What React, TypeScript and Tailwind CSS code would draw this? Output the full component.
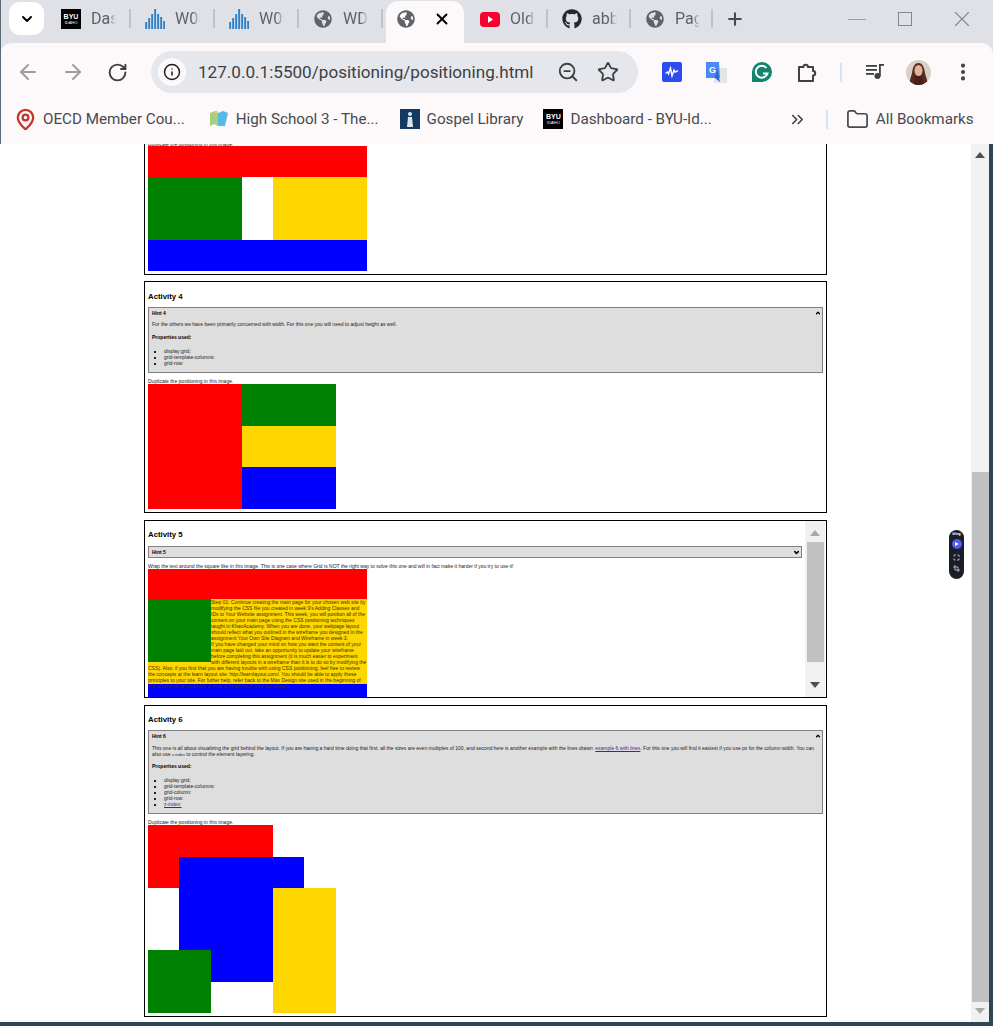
import type { ReactNode } from 'react';
import {
  ArrowLeft,
  ArrowRight,
  ChevronDown,
  ChevronUp,
  ChevronsRight,
  EllipsisVertical,
  Folder,
  Info,
  MapPin,
  Plus,
  RotateCw,
  Star,
  X,
  ZoomOut,
} from 'lucide-react';
import { FaGithub, FaGlobeAmericas } from 'react-icons/fa';

/* favicons */

function ByuLogo() {
  return (
    <div className="flex h-5 w-5 shrink-0 flex-col items-center justify-center bg-black text-white font-['Liberation_Sans',sans-serif] leading-none">
      <span className="text-[7px] font-bold leading-[7px]">BYU</span>
      <span className="text-[4px] leading-[5px]">IDAHO</span>
    </div>
  );
}

function BarsIcon() {
  const bars = [7, 11, 15, 20, 15, 12, 8];
  return (
    <svg width="20" height="20" viewBox="0 0 20 20" className="shrink-0">
      {bars.map((h, i) => (
        <rect key={i} x={i * 3 + 0.2} y={20 - h} width="1.9" height={h} fill="#2f80c8" />
      ))}
    </svg>
  );
}

function Globe({ size = 18 }: { size?: number }) {
  return <FaGlobeAmericas size={size} className="shrink-0 text-[#5f6368]" />;
}

function YoutubeIcon() {
  return (
    <svg width="20" height="15" viewBox="0 0 20 15" className="shrink-0">
      <rect width="20" height="15" rx="4" fill="#f5002f" />
      <path d="M8 4l5 3.5L8 11z" fill="#fff" />
    </svg>
  );
}

function TabLabel({ children }: { children: ReactNode }) {
  return (
    <span className="ml-[10px] w-[25px] overflow-hidden whitespace-nowrap text-[16px] text-[#5f6368] [mask-image:linear-gradient(to_right,black_70%,transparent)]">
      {children}
    </span>
  );
}

function Tab({ icon, label, width = 'w-[84px]' }: { icon: ReactNode; label: string; width?: string }) {
  return (
    <div className={`relative flex h-[34px] shrink-0 items-center pl-[14px] ${width}`}>
      <div className="flex w-5 justify-center">{icon}</div>
      <TabLabel>{label}</TabLabel>
      <div className="absolute right-0 top-[7px] h-[19px] w-[2px] bg-[#bfc2c8]" />
    </div>
  );
}

function TabStrip() {
  return (
    <div className="flex h-[43px] shrink-0 bg-[#dfe1e7] pt-[2px]">
      <div className="ml-[9px] flex h-[33px] w-[35px] items-center justify-center rounded-[11px] bg-white">
        <ChevronDown size={16} strokeWidth={3} className="text-black" />
      </div>
      <div className="ml-[3px] flex">
        <Tab icon={<ByuLogo />} label="Das" />
        <Tab icon={<BarsIcon />} label="W00" />
        <Tab icon={<BarsIcon />} label="W00" />
        <Tab icon={<Globe />} label="WD" />
      </div>
      <div className="-mt-[1px] ml-[3px] flex h-[42px] w-[78px] items-start rounded-t-[12px] bg-[#fdf8fa] pl-[11px] pt-[9px]">
        <Globe />
        <X size={18} strokeWidth={2.5} className="ml-[18px] text-black" />
      </div>
      <div className="flex">
        <div className="relative flex h-[34px] w-[84px] items-center pl-[16px]">
          <YoutubeIcon />
          <TabLabel>Old</TabLabel>
          <div className="absolute right-0 top-[7px] h-[19px] w-[2px] bg-[#bfc2c8]" />
        </div>
        <Tab icon={<FaGithub size={20} className="text-[#24292f]" />} label="abb" width="w-[83px]" />
        <Tab icon={<Globe />} label="Pag" width="w-[82px]" />
      </div>
      <Plus size={20} strokeWidth={2.5} className="ml-[12px] mt-[7px] text-[#45484d]" />
      <div className="ml-auto flex h-[34px] items-center text-[#84878c]">
        <div className="h-px w-[18px] bg-[#9a9da2]" />
        <div className="ml-[32px] h-[14px] w-[14px] border border-[#84878c]" />
        <X size={26} strokeWidth={1} className="ml-[37px] mr-[18px]" />
      </div>
    </div>
  );
}

function PuzzleIcon() {
  return (
    <svg width="21" height="21" viewBox="0 0 21 21" fill="none" stroke="#3c4043" strokeWidth="2" strokeLinejoin="round">
      <path d="M2 5h4.500a2.200 2.200 0 0 1 4.400 0H16v4a2.200 2.200 0 0 1 0 4.400V19H2z" />
    </svg>
  );
}

function Toolbar() {
  return (
    <div className="flex h-[58px] items-center pt-[8px] pb-[8px] text-[#5f6368]">
      <ArrowLeft size={24} strokeWidth={1.9} className="ml-[16px] text-[#9a9da2]" />
      <ArrowRight size={24} strokeWidth={1.9} className="ml-[21px] text-[#9a9da2]" />
      <RotateCw size={21} strokeWidth={2.2} className="ml-[22px] text-[#3c4043]" />
      <div className="ml-[23px] flex h-[42px] w-[487px] items-center rounded-full bg-[#e6e7ec] pl-[7px]">
        <div className="flex h-[28px] w-[28px] items-center justify-center rounded-full bg-[#fdf8fa]">
          <Info size={18} strokeWidth={2} className="text-[#1f1f1f]" />
        </div>
        <span className="ml-[12px] whitespace-nowrap pt-[1px] font-['Roboto',sans-serif] text-[17.100px] text-[#3c4043]">
          127.0.0.1:5500/positioning/positioning.html
        </span>
        <ZoomOut size={22} strokeWidth={2} className="ml-[24px] text-[#3c4043]" />
        <Star size={22} strokeWidth={2} className="ml-[18px] text-[#3c4043]" />
      </div>
      <div className="ml-[24px] flex h-5 w-5 items-center justify-center rounded-[2px] bg-[#2f4cf0]">
        <svg width="14" height="12" viewBox="0 0 14 12" fill="none" stroke="#fff" strokeWidth="1.4" strokeLinecap="round">
          <path d="M1 7l1.500-1 1 2 2-6 1.500 8 2-6 1 2 2.500-1" />
        </svg>
      </div>
      <svg width="21" height="21" viewBox="0 0 21 21" className="ml-[24px]">
        <rect x="8" y="6" width="13" height="15" fill="#e3e4e8" />
        <path d="M0 0h13l1 16H0z" fill="#4a8af4" />
        <path d="M11 6l3 14-5-4z" fill="#3367c9" />
        <text x="3" y="11" fontSize="9" fontWeight="700" fill="#fff" fontFamily="Liberation Sans, sans-serif">
          G
        </text>
      </svg>
      <svg width="20" height="20" viewBox="0 0 20 20" className="ml-[25px]">
        <path d="M10 0a10 10 0 0 1 10 10 10 10 0 0 1-10 10H0V10A10 10 0 0 1 10 0z" fill="#11846b" />
        <path d="M14.500 6a6 6 0 1 0 1 5.500H11" fill="none" stroke="#fff" strokeWidth="2" />
      </svg>
      <div className="ml-[25px] flex">
        <PuzzleIcon />
      </div>
      <div className="ml-[22px] h-[19px] w-[2px] bg-[#d5e2f7]" />
      <svg width="19" height="18" viewBox="0 0 19 18" className="ml-[24px]" fill="#3c4043">
        <rect x="0" y="2" width="11" height="1.800" />
        <rect x="0" y="6" width="11" height="1.800" />
        <rect x="0" y="10" width="8" height="1.800" />
        <rect x="13" y="1" width="1.800" height="12" />
        <rect x="13" y="1" width="5" height="1.800" />
        <circle cx="11.500" cy="13" r="3" />
      </svg>
      <svg width="25" height="25" viewBox="0 0 25 25" className="ml-[21px] rounded-full">
        <rect width="25" height="25" fill="#d8cfc6" />
        <path d="M3 25c1-6 2-8 3-12 1-7 3-10 6.500-10S18 6 19 13c1 4 2 6 3 12z" fill="#5a2a1d" />
        <ellipse cx="12.500" cy="10.500" rx="4" ry="5.500" fill="#e2b39c" />
        <path d="M9 16h7l2 9H7z" fill="#4a1f18" />
      </svg>
      <EllipsisVertical size={22} strokeWidth={2.5} className="ml-[21px] text-[#3c4043]" />
    </div>
  );
}

function Bookmark({ icon, label, className }: { icon: ReactNode; label: string; className: string }) {
  return (
    <div className={`flex items-center ${className}`}>
      {icon}
      <span className="ml-[7px] whitespace-nowrap font-['Roboto',sans-serif] text-[15.200px] text-[#474a4f]">{label}</span>
    </div>
  );
}

function Bookmarks() {
  return (
    <div className="flex h-[36px] items-center">
      <Bookmark
        className="ml-[14px]"
        icon={<MapPin size={23} strokeWidth={2.4} className="-mr-[1px] text-[#c5352d]" />}
        label="OECD Member Cou..."
      />
      <Bookmark
        className="ml-[24px]"
        icon={
          <svg width="20" height="18" viewBox="0 0 20 18">
            <path d="M1 3l5-2 3 2v13l-4-2-4 2z" fill="#a7cf7c" />
            <path d="M9 3l5-2 5 2-3 13H9z" fill="#58b8e6" />
            <circle cx="7" cy="2.500" r="1.800" fill="#e7c35b" />
          </svg>
        }
        label="High School 3 - The..."
      />
      <Bookmark
        className="ml-[21px]"
        icon={
          <div className="flex h-5 w-5 items-center justify-center bg-[#143a5f]">
            <svg width="10" height="16" viewBox="0 0 10 16" fill="#dbe6ef">
              <circle cx="5" cy="3" r="2" />
              <path d="M2 16l1-10h4l1 10z" />
            </svg>
          </div>
        }
        label="Gospel Library"
      />
      <Bookmark className="ml-[20px]" icon={<ByuLogo />} label="Dashboard - BYU-Id..." />
      <ChevronsRight size={19} strokeWidth={2} className="ml-[76px] text-[#3c4043]" />
      <div className="ml-[19px] h-[19px] w-[2px] bg-[#d5e2f7]" />
      <Bookmark
        className="ml-[18px]"
        icon={<Folder size={23} strokeWidth={1.8} className="text-[#45484d]" />}
        label="All Bookmarks"
      />
    </div>
  );
}

/* page content, rendered at browser zoom so everything is tiny */

function ActivityTitle({ children }: { children: ReactNode }) {
  return <h2 className="text-[7.800px] font-bold leading-[10px] text-black">{children}</h2>;
}

function Activity({ className, children }: { className: string; children: ReactNode }) {
  return <section className={`border border-black bg-white px-[3px] ${className}`}>{children}</section>;
}

function ImageLink() {
  return (
    <>
      <span className="text-[#2a2a7a]">this</span> image
    </>
  );
}

function PropertyList({ items }: { items: ReactNode[] }) {
  return (
    <ul className="mt-[8px] list-[square] pl-[12px] leading-[6px]">
      {items.map((item, i) => (
        <li key={i}>{item}</li>
      ))}
    </ul>
  );
}

function HintBox({ title, className, children }: { title: string; className: string; children: ReactNode }) {
  return (
    <div className={`relative border border-[#808080] bg-[#dedede] px-[3px] ${className}`}>
      <div className="pt-[2px] font-bold leading-[6px] text-black">{title}</div>
      <ChevronUp size={6} strokeWidth={5} className="absolute right-[1px] top-[2px] text-black" />
      {children}
    </div>
  );
}

function Activity5Text() {
  return (
    <>
      Step 01: Continue creating the main page for your chosen web site by modifying the CSS file you created in week
      9's Adding Classes and IDs to Your Website assignment. This week, you will position all of the content on your main
      page using the CSS positioning techniques taught in KhanAcademy. When you are done, your webpage layout should
      reflect what you outlined in the wireframe you designed in the assignment Your Own Site Diagram and Wireframe in
      week 3.
      <br />
      If you have changed your mind on how you want the content of your main page laid out, take an opportunity to update
      your wireframe before completing this assignment (it is much easier to experiment with different layouts in a
      wireframe than it is to do so by modifying the CSS). Also, if you find that you are having trouble with using CSS
      positioning, feel free to review the concepts at the learn layout site: http://learnlayout.com/. You should be able
      to apply these principles to your site. For futher help, refer back to the Max Design site used in the beginning of
      the course for an example of how to implement your site design.
    </>
  );
}

function PageContent() {
  return (
    <div className="ml-[144px] flex w-[683px] flex-col font-['Liberation_Sans',Arial,sans-serif] text-[5px] text-[#222]">
      <Activity className="h-[131px] border-t-0">
        <p className="-mt-[3px] h-[5px] leading-[6px]">Duplicate the positioning in this image.</p>
        <div className="grid w-[219px] grid-cols-[94px_31px_94px] grid-rows-[31px_63px_31px]">
          <div className="col-span-3 bg-[#ff0000]" />
          <div className="bg-[#008000]" />
          <div className="bg-white" />
          <div className="bg-[#ffd700]" />
          <div className="col-span-3 bg-[#0000ff]" />
        </div>
      </Activity>

      <Activity className="mt-[6px] h-[232px]">
        <div className="pt-[10px]">
          <ActivityTitle>Activity 4</ActivityTitle>
        </div>
        <HintBox title="Hint 4" className="mt-[5px] h-[66px]">
          <p className="mt-[5px] leading-[6px]">
            For the others we have been primarily concerned with width. For this one you will need to adjust height as
            well.
          </p>
          <p className="mt-[7px] font-bold leading-[6px] text-black">Properties used:</p>
          <PropertyList items={['display:grid;', 'grid-template-columns:', 'grid-row:']} />
        </HintBox>
        <p className="mt-[5px] h-[6px] leading-[6px]">
          Duplicate the positioning in <ImageLink />.
        </p>
        <div className="grid w-[188px] grid-cols-[94px_94px] grid-rows-[42px_41px_42px]">
          <div className="row-span-3 bg-[#ff0000]" />
          <div className="bg-[#008000]" />
          <div className="bg-[#ffd700]" />
          <div className="bg-[#0000ff]" />
        </div>
      </Activity>

      <Activity className="mt-[7px] flex h-[178px] overflow-hidden !pr-[1px]">
        <div className="min-w-0 flex-1 overflow-hidden pr-[3px]">
          <div className="pt-[9px]">
            <ActivityTitle>Activity 5</ActivityTitle>
          </div>
          <div className="relative mt-[6px] h-[12px] border border-[#808080] bg-[#dedede] px-[3px] font-bold leading-[10px] text-black">
            Hint 5
            <ChevronDown size={7} strokeWidth={5} className="absolute right-[1px] top-[2px]" />
          </div>
          <p className="mt-[5px] h-[6px] whitespace-nowrap leading-[6px]">
            Wrap the text around the square like in <ImageLink />. This is one case where Grid is NOT the right way to
            solve this one and will in fact make it harder if you try to use it!
          </p>
          <div className="w-[219px]">
            <div className="h-[30px] bg-[#ff0000]" />
            <div className="h-[85px] bg-[#ffd700] leading-[6px] text-[#3a3000]">
              <div className="float-left h-[63px] w-[63px] bg-[#008000]" />
              <Activity5Text />
            </div>
            <div className="h-[31px] bg-[#0000ff]" />
          </div>
        </div>
        <div className="flex w-[20px] shrink-0 flex-col items-center bg-[#f1f1f1]">
          <svg width="10" height="6" viewBox="0 0 10 6" className="mt-[9px]" fill="#a8a8a8">
            <path d="M5 0l5 6H0z" />
          </svg>
          <div className="mt-[6px] h-[120px] w-[17px] bg-[#c1c1c1]" />
          <svg width="10" height="6" viewBox="0 0 10 6" className="mt-[20px]" fill="#505050">
            <path d="M0 0h10L5 6z" />
          </svg>
        </div>
      </Activity>

      <Activity className="mt-[7px] h-[312px]">
        <div className="pt-[9px]">
          <ActivityTitle>Activity 6</ActivityTitle>
        </div>
        <HintBox title="Hint 6" className="mt-[5px] h-[84px]">
          <p className="mt-[6px] leading-[6px]">
            This one is all about visualizing the grid behind the layout. If you are having a hard time doing that first:
            all the sizes are even multiples of 100, and second here is another example with the lines drawn:{' '}
            <span className="text-[#551a8b] underline">example 6 with lines</span>. For this one you will find it easiest
            if you use px for the column width. You can also use <span className="text-[4px]">z-index</span> to control
            the element layering.
          </p>
          <p className="mb-[1px] mt-[5px] font-bold leading-[6px] text-black">Properties used:</p>
          <PropertyList
            items={[
              'display:grid;',
              'grid-template-columns:',
              'grid-column:',
              'grid-row:',
              <span className="text-[#551a8b] underline">z-index:</span>,
            ]}
          />
        </HintBox>
        <p className="mt-[5px] h-[6px] leading-[6px]">
          Duplicate the positioning in <ImageLink />.
        </p>
        <div className="grid w-[188px] grid-cols-[31px_32px_31px_31px_31px_32px] grid-rows-[32px_31px_31px_31px_32px_31px]">
          <div className="col-start-1 col-end-5 row-start-1 row-end-3 bg-[#ff0000]" />
          <div className="col-start-2 col-end-6 row-start-2 row-end-6 bg-[#0000ff]" />
          <div className="col-start-5 col-end-7 row-start-3 row-end-7 bg-[#ffd700]" />
          <div className="col-start-1 col-end-3 row-start-5 row-end-7 bg-[#008000]" />
        </div>
      </Activity>
    </div>
  );
}

function PageScrollbar() {
  return (
    <div className="flex w-[18px] flex-col items-center bg-[#f1f1f1]">
      <svg width="10" height="6" viewBox="0 0 10 6" className="mt-[8px]" fill="#505050">
        <path d="M5 0l5 6H0z" />
      </svg>
      <div className="mt-[314px] h-[530px] w-[17px] bg-[#c1c1c1]" />
      <svg width="10" height="6" viewBox="0 0 10 6" className="mt-[6px]" fill="#a8a8a8">
        <path d="M0 0h10L5 6z" />
      </svg>
    </div>
  );
}

export default function App() {
  return (
    <div className="relative flex h-[1026px] w-[993px] flex-col overflow-hidden bg-[#dfe1e7] font-['Roboto',sans-serif]">
      <TabStrip />
      <div className="flex h-[101px] shrink-0 flex-col rounded-t-[12px] bg-[#fdf8fa]">
        <Toolbar />
        <Bookmarks />
      </div>
      <div className="flex h-[878px] shrink-0 bg-white">
        <div className="w-[971px] overflow-hidden">
          <PageContent />
        </div>
        <PageScrollbar />
        <div className="w-[4px] bg-[#2f4650]" />
      </div>
      <div className="h-[4px] shrink-0 bg-[#2f4650]" />

      {/* window edge */}
      <div className="absolute left-0 top-0 h-[144px] w-px bg-[#5a6a78]" />

      {/* floating recorder widget sits over the page */}
      <div className="absolute left-[949px] top-[530px] flex h-[49px] w-[15px] flex-col items-center rounded-full bg-[#1b1d27] pt-[2px]">
        <span className="text-[3.500px] font-bold leading-[5px] text-white">bling</span>
        <div className="mt-[2px] flex h-[10px] w-[10px] items-center justify-center rounded-full bg-[#4f5df5]">
          <svg width="4" height="4" viewBox="0 0 4 4" fill="#fff">
            <path d="M0 0l4 2-4 2z" />
          </svg>
        </div>
        <svg width="7" height="7" viewBox="0 0 7 7" className="mt-[5px]" fill="none" stroke="#d0d0d0" strokeWidth="0.800">
          <path d="M1 2.500V1h2M4.500 1H6v2M6 4.500V6H4M2.500 6H1V4.500" />
        </svg>
        <svg width="7" height="7" viewBox="0 0 7 7" className="mt-[4px]" fill="none" stroke="#d0d0d0" strokeWidth="0.800">
          <path d="M2 0v5h5M0 2h5v5" />
        </svg>
      </div>
    </div>
  );
}
